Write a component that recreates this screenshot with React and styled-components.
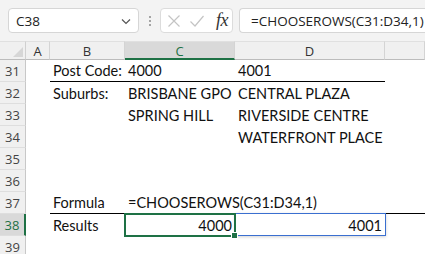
import React from "react";
import styled, { createGlobalStyle } from "styled-components";

const GlobalStyle = createGlobalStyle`
  body {
    margin: 0;
    background: #ffffff;
    overflow: hidden;
  }
`;

const GREEN = "#1e7145";
const UI_FONT = `"Open Sans", "Noto Sans", sans-serif`;
const CELL_FONT = `Lato, "Liberation Sans", sans-serif`;

const Sheet = styled.div`
  width: 425px;
  height: 254px;
  overflow: hidden;
  font-family: ${UI_FONT};
`;

const Toolbar = styled.div`
  height: 41px;
  box-sizing: border-box;
  padding: 8px 0 0 8px;
  background: #f3f3f3;
  display: flex;
  align-items: flex-start;
`;

const NameBox = styled.div`
  width: 131px;
  height: 25px;
  box-sizing: border-box;
  border: 1px solid #d6d6d6;
  border-radius: 4px;
  background: #fff;
  display: flex;
  align-items: center;
  justify-content: space-between;
  padding: 0 6px 0 6px;
  font-size: 13.5px;
  color: #222;
`;

const Dots = styled.div`
  width: 21px;
  height: 25px;
  display: flex;
  flex-direction: column;
  align-items: center;
  justify-content: center;
  gap: 2px;
  span {
    width: 2px;
    height: 2px;
    background: #8a8a8a;
    border-radius: 1px;
  }
`;

const FxBox = styled.div`
  width: 73px;
  height: 25px;
  box-sizing: border-box;
  border: 1px solid #dcdcdc;
  border-radius: 4px;
  background: #fff;
  display: flex;
  align-items: center;
  padding-left: 6px;
  gap: 8px;
`;

const FxLabel = styled.span`
  font-family: "Liberation Serif", serif;
  font-style: italic;
  font-size: 18px;
  color: #333;
  margin-left: 3px;
  letter-spacing: -0.5px;
`;

const FormulaBox = styled.div`
  margin-left: 6px;
  flex: 1;
  height: 25px;
  box-sizing: border-box;
  border: 1px solid #d6d6d6;
  border-right: none;
  border-radius: 4px 0 0 4px;
  background: #fff;
  display: flex;
  align-items: center;
  padding-left: 11px;
  font-size: 13.5px;
  color: #222;
  white-space: nowrap;
  overflow: hidden;
`;

const Grid = styled.div`
  display: grid;
  grid-template-columns: 26px 24px 75px 110px 150px 1fr;
  grid-template-rows: 19px repeat(9, 22px);
`;

const Corner = styled.div`
  background: #f0f0f0;
  border-top: 1px solid #e0e0e0;
  border-right: 1px solid #d0d0d0;
  border-bottom: 1px solid #bcbcbc;
  box-sizing: border-box;
  position: relative;
  svg {
    position: absolute;
    right: 2px;
    bottom: 2px;
  }
`;

const ColHeader = styled.div`
  background: ${(p) => (p.$active ? "#d9d9d9" : "#f0f0f0")};
  color: ${(p) => (p.$active ? GREEN : "#333")};
  border-top: 1px solid #e0e0e0;
  border-right: 1px solid #d4d4d4;
  border-bottom: ${(p) => (p.$active ? `2px solid ${GREEN}` : "1px solid #bcbcbc")};
  box-sizing: border-box;
  display: flex;
  align-items: center;
  justify-content: center;
  font-size: 13px;
  padding-top: ${(p) => (p.$active ? "1px" : "0")};
`;

const RowHeader = styled.div`
  background: ${(p) => (p.$active ? "#d9d9d9" : "#f0f0f0")};
  color: ${(p) => (p.$active ? GREEN : "#444")};
  border-right: ${(p) => (p.$active ? `2px solid ${GREEN}` : "1px solid #c8c8c8")};
  border-bottom: 1px solid #dedede;
  box-sizing: border-box;
  display: flex;
  align-items: center;
  justify-content: center;
  font-size: 13px;
`;

const Cell = styled.div`
  position: relative;
  box-sizing: border-box;
  border-bottom: ${(p) => (p.$rule ? "1px solid #000" : "none")};
  display: flex;
  align-items: center;
  justify-content: ${(p) => (p.$right ? "flex-end" : "flex-start")};
  padding: 0 3px 0 3px;
  font-family: ${CELL_FONT};
  font-size: 14.5px;
  color: #111;
  white-space: nowrap;
  overflow: visible;
  z-index: ${(p) => (p.$top ? 2 : 1)};
`;

const ActiveFrame = styled.div`
  position: absolute;
  left: -1px;
  top: -1px;
  right: -1px;
  bottom: -1px;
  border: 2px solid ${GREEN};
  pointer-events: none;
  &::after {
    content: "";
    position: absolute;
    right: -4px;
    bottom: -4px;
    width: 5px;
    height: 5px;
    background: ${GREEN};
    border: 1px solid #fff;
  }
`;

const SpillFrame = styled.div`
  position: absolute;
  left: 0;
  top: -1px;
  right: -1px;
  bottom: 0;
  border: 1px solid #3a6fd0;
  box-shadow: 0 1px 3px rgba(0, 0, 0, 0.18);
  pointer-events: none;
`;

const columns = ["A", "B", "C", "D", ""];
const keys = ["A", "B", "C", "D", "E"];

const rows = [
  { n: 31, B: "Post Code:", C: "4000", D: "4001", rule: ["B", "C", "D"] },
  { n: 32, B: "Suburbs:", C: "BRISBANE GPO", D: "CENTRAL PLAZA" },
  { n: 33, C: "SPRING HILL", D: "RIVERSIDE CENTRE" },
  { n: 34, D: "WATERFRONT PLACE" },
  { n: 35 },
  { n: 36 },
  { n: 37, B: "Formula", C: "=CHOOSEROWS(C31:D34,1)", rule: ["B", "C", "D", "E"] },
  { n: 38, B: "Results", C: "4000", D: "4001", right: ["C", "D"], active: true },
  { n: 39 },
];

const Chevron = () => (
  <svg width="12" height="12" viewBox="0 0 12 12">
    <path d="M2 4.5 L6 8.5 L10 4.5" fill="none" stroke="#555" strokeWidth="1.2" />
  </svg>
);

const CancelIcon = () => (
  <svg width="14" height="14" viewBox="0 0 14 14">
    <path d="M1.5 1.5 L12.5 12.5 M12.5 1.5 L1.5 12.5" stroke="#c4c4c4" strokeWidth="1.2" fill="none" />
  </svg>
);

const EnterIcon = () => (
  <svg width="16" height="14" viewBox="0 0 16 14">
    <path d="M1.5 7.5 L6 12 L14.5 2" stroke="#c4c4c4" strokeWidth="1.2" fill="none" />
  </svg>
);

export default function App() {
  return (
    <Sheet>
      <GlobalStyle />
      <Toolbar>
        <NameBox>
          <span style={{ paddingLeft: 1 }}>C38</span>
          <Chevron />
        </NameBox>
        <Dots>
          <span />
          <span />
          <span />
        </Dots>
        <FxBox>
          <CancelIcon />
          <EnterIcon />
          <FxLabel>fx</FxLabel>
        </FxBox>
        <FormulaBox>=CHOOSEROWS(C31:D34,1)</FormulaBox>
      </Toolbar>
      <Grid>
        <Corner>
          <svg width="10" height="10" viewBox="0 0 10 10">
            <path d="M10 0 L10 10 L0 10 Z" fill="#d6d6d6" />
          </svg>
        </Corner>
        {columns.map((c, i) => (
          <ColHeader key={i} $active={c === "C"}>
            {c}
          </ColHeader>
        ))}
        {rows.map((r) => (
          <React.Fragment key={r.n}>
            <RowHeader $active={r.active}>{r.n}</RowHeader>
            {keys.map((k) => {
              const rule = r.rule && r.rule.includes(k);
              const right = r.right && r.right.includes(k);
              const isActive = r.active && k === "C";
              const isSpill = r.active && k === "D";
              return (
                <Cell key={k} $rule={rule} $right={right} $top={isActive}>
                  {r[k]}
                  {isSpill && <SpillFrame />}
                  {isActive && <ActiveFrame />}
                </Cell>
              );
            })}
          </React.Fragment>
        ))}
      </Grid>
    </Sheet>
  );
}
